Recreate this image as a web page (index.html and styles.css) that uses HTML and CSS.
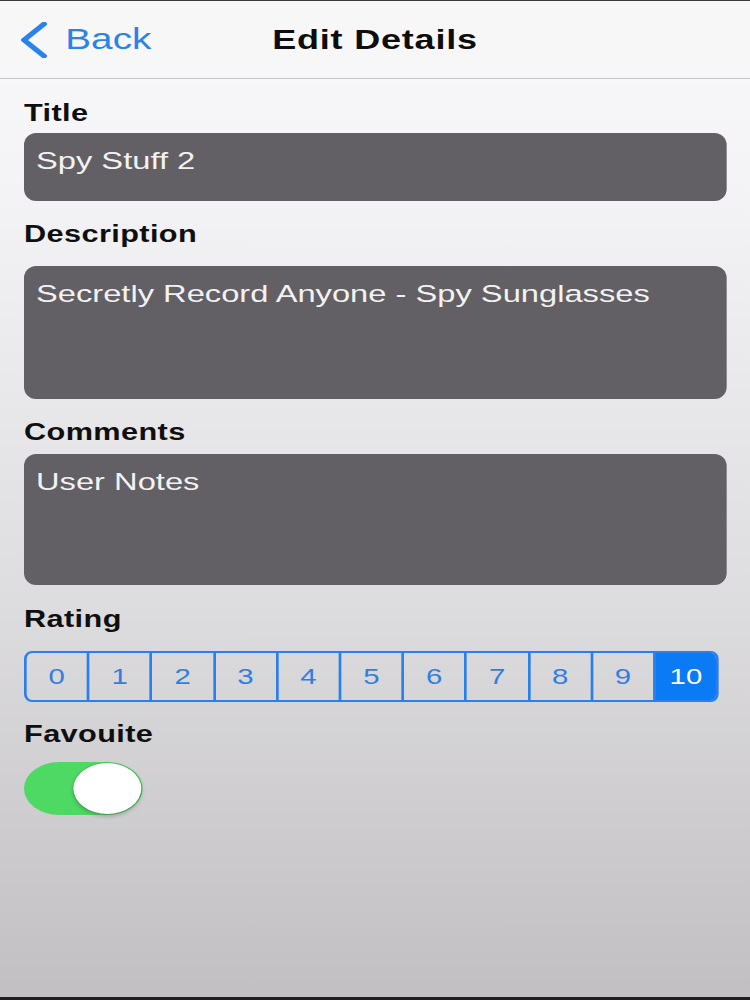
FILE: index.html
```html
<!DOCTYPE html>
<html lang="en">
<head>
    <meta charset="UTF-8">
    <meta name="viewport" content="width=device-width, initial-scale=1.0">
    <title>Edit Details</title>
    <link rel="stylesheet" href="styles.css">
</head>
<body>
    <div class="screen">
        <div class="nav">
            <a class="back" href="#">
                <svg class="chevron" width="21" height="36" viewBox="0 0 21 36">
                    <path d="M18 2 L3 18 L18 34" fill="none" stroke="#2a82ea" stroke-width="4.5" stroke-linecap="round" stroke-linejoin="round"/>
                </svg>
                <span>Back</span>
            </a>
            <h1 class="nav-title">Edit Details</h1>
            <span></span>
        </div>

        <form class="form">
            <label class="field-label label-title" for="title">Title</label>
            <input class="field-box box-title" id="title" type="text" value="Spy Stuff 2">

            <label class="field-label label-desc" for="desc">Description</label>
            <textarea class="field-box box-desc" id="desc">Secretly Record Anyone - Spy Sunglasses</textarea>

            <label class="field-label label-comments" for="comments">Comments</label>
            <textarea class="field-box box-comments" id="comments">User Notes</textarea>

            <div class="field-label label-rating">Rating</div>
            <div class="segmented">
                <button type="button" class="seg">0</button>
                <button type="button" class="seg">1</button>
                <button type="button" class="seg">2</button>
                <button type="button" class="seg">3</button>
                <button type="button" class="seg">4</button>
                <button type="button" class="seg">5</button>
                <button type="button" class="seg">6</button>
                <button type="button" class="seg">7</button>
                <button type="button" class="seg">8</button>
                <button type="button" class="seg">9</button>
                <button type="button" class="seg selected">10</button>
            </div>

            <div class="field-label label-fav">Favouite</div>
            <div class="toggle on">
                <span class="knob"></span>
            </div>
        </form>
    </div>
</body>
</html>
```

FILE: styles.css
```css
html, body {
    margin: 0;
    padding: 0;
}
body {
    height: 1000px;
    box-sizing: border-box;
    overflow: hidden;
    font-family: "Liberation Sans", Arial, sans-serif;
    background: linear-gradient(#f9f8fa 0%, #f3f2f4 20%, #dddcde 60%, #c1bfc2 100%);
    border-top: 1px solid #3a3a3a;
    border-bottom: 3px solid #1e1e1e;
}
.screen {
    width: 562.5px;
    transform: scaleX(1.33333);
    transform-origin: 0 0;
}
.nav {
    height: 77px;
    background: #f7f7f8;
    border-bottom: 1px solid #c6c6c8;
    display: grid;
    grid-template-columns: 1fr auto 1fr;
    align-items: center;
}
.back {
    display: flex;
    align-items: center;
    gap: 13px;
    padding-left: 15px;
    color: #2a82ea;
    text-decoration: none;
    font-size: 29px;
}
.chevron {
    display: block;
}
.nav-title {
    margin: 0;
    padding-top: 2px;
    font-size: 27px;
    letter-spacing: 0.6px;
    font-weight: bold;
    color: #0d0d0d;
}
.form {
    display: flex;
    flex-direction: column;
    align-items: flex-start;
    padding: 0 18px;
}
.field-label {
    display: block;
    font-size: 23px;
    line-height: 28px;
    letter-spacing: 0.3px;
    font-weight: bold;
    color: #0f0f0f;
}
.label-title { margin-top: 20px; }
.label-desc { margin-top: 19px; }
.label-comments { margin-top: 19px; }
.label-rating { margin-top: 20px; }
.label-fav { margin-top: 18px; }

.field-box {
    display: block;
    width: 100%;
    box-sizing: border-box;
    margin: 0;
    border: none;
    outline: none;
    resize: none;
    background: #626064;
    color: #f2f2f2;
    font-family: "Liberation Sans", Arial, sans-serif;
    font-size: 24.5px;
    line-height: 30px;
    padding: 13px 9px;
    border-radius: 9px / 12px;
    overflow: hidden;
}
.box-title {
    margin-top: 6px;
    height: 68px;
    padding-bottom: 25px;
}
.box-desc {
    margin-top: 18px;
    height: 133px;
}
.box-comments {
    margin-top: 8px;
    height: 131px;
}
.segmented {
    margin-top: 18px;
    width: 521px;
    height: 51px;
    box-sizing: border-box;
    display: flex;
    border: 2px solid #2a7fea;
    border-radius: 6px / 8px;
    overflow: hidden;
}
.seg {
    flex: 1;
    margin: 0;
    padding: 0;
    border: none;
    border-left: 2px solid #2a7fea;
    background: transparent;
    color: #2f7fe0;
    font-family: "Liberation Sans", Arial, sans-serif;
    font-size: 22px;
    cursor: pointer;
}
.seg:first-child {
    border-left: none;
}
.seg.selected {
    background: #0b7bf5;
    color: #fff;
}
.toggle {
    margin-top: 14px;
    width: 89px;
    height: 53px;
    box-sizing: border-box;
    padding: 1px;
    border-radius: 27px;
    background: #4ed964;
    display: flex;
    justify-content: flex-end;
}
.knob {
    width: 51px;
    height: 51px;
    border-radius: 50%;
    background: #fff;
    box-shadow: 0 2px 4px rgba(0, 0, 0, 0.25), 0 0 0 0.5px rgba(0, 0, 0, 0.15);
}
```
